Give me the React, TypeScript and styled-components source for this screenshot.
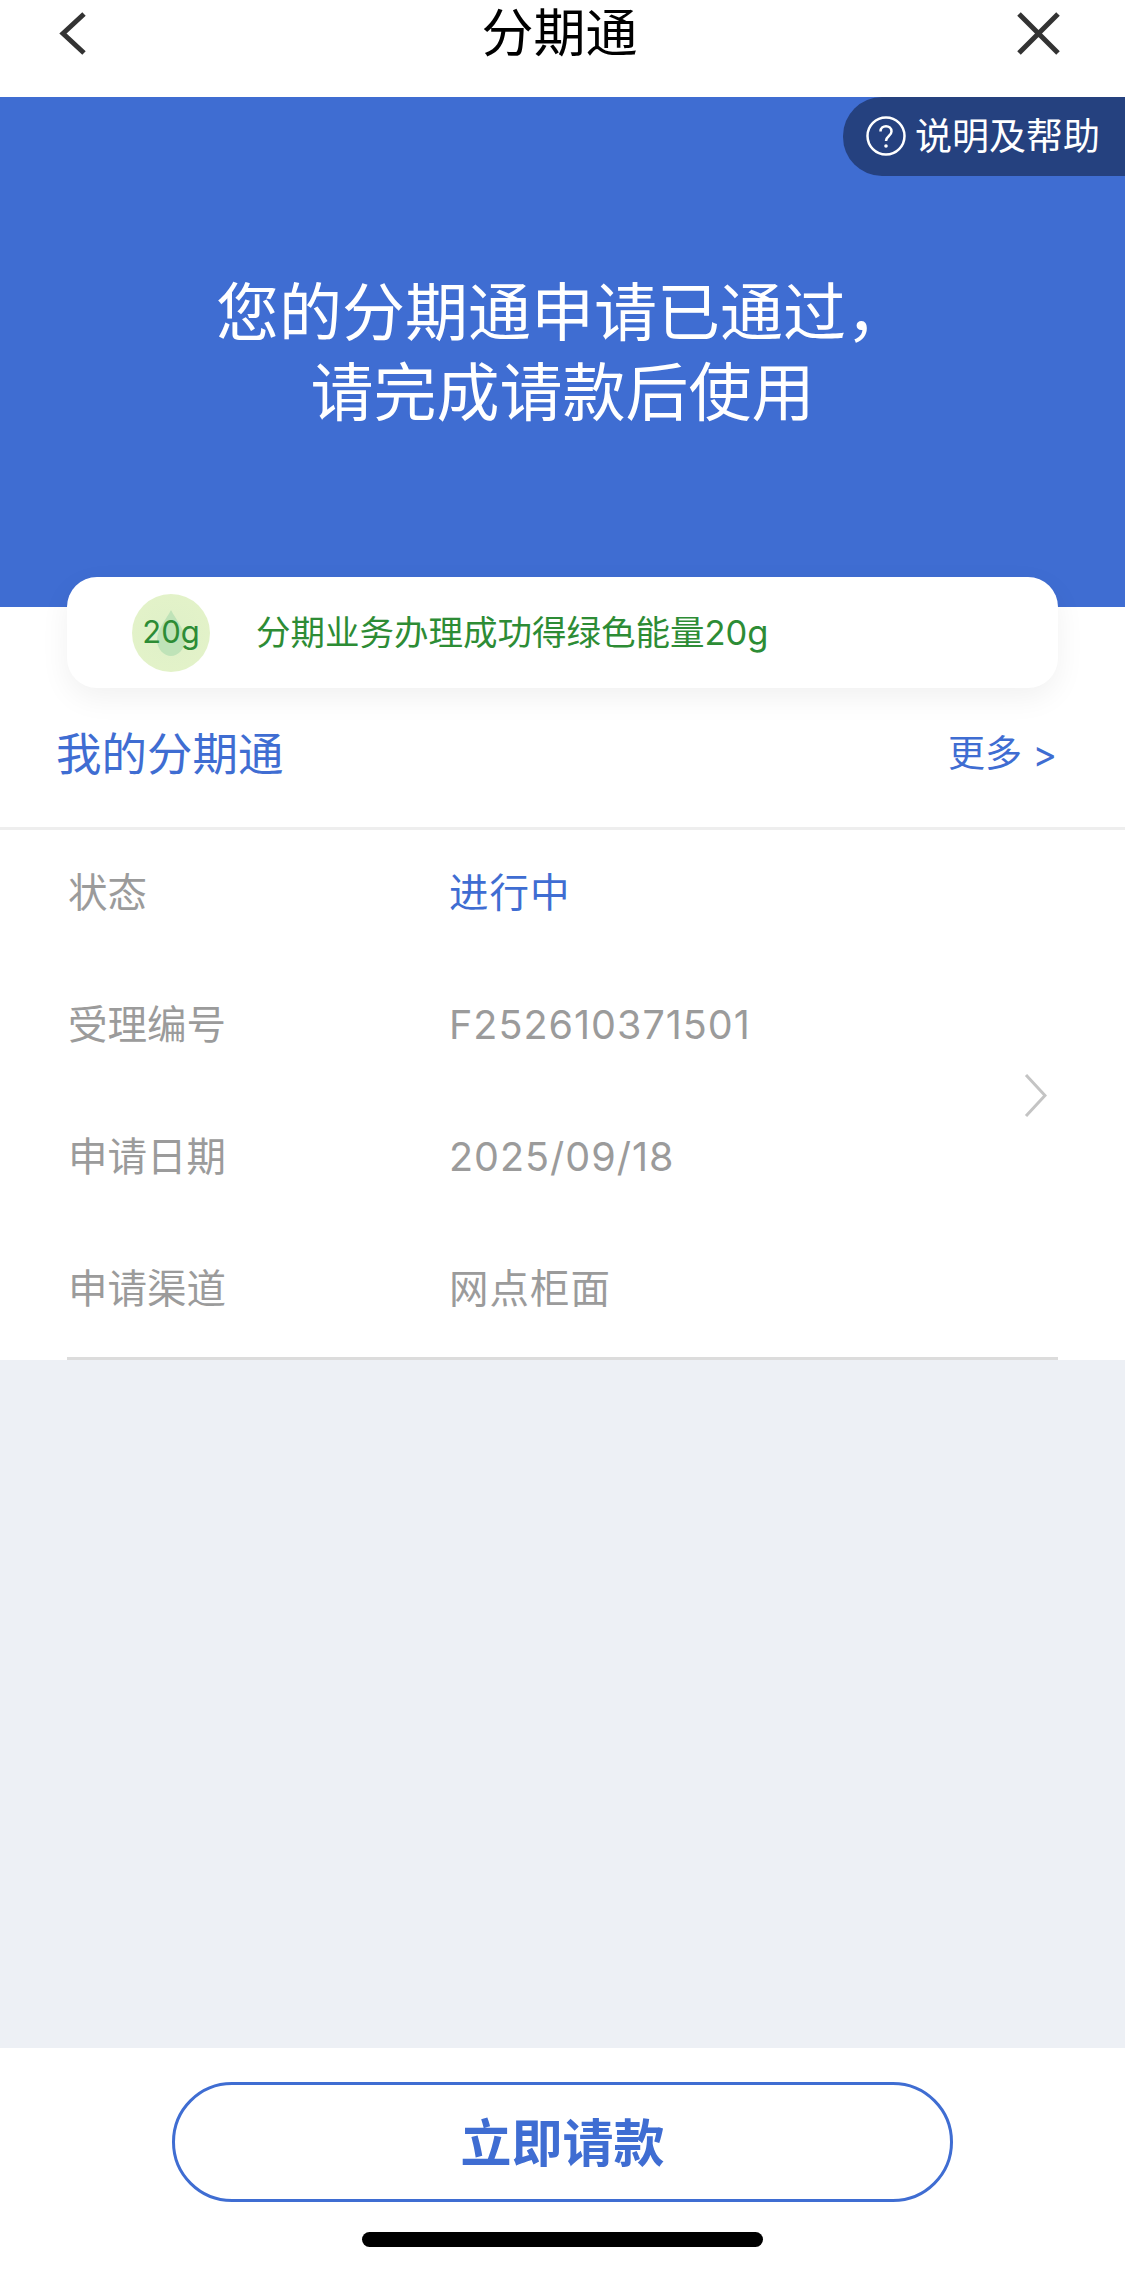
import React from "react";
import styled, { createGlobalStyle } from "styled-components";

const Global = createGlobalStyle`
  html, body { margin: 0; padding: 0; background: #fff; }
  body { font-family: Inter, "Noto Sans CJK SC", sans-serif; }
  * { box-sizing: border-box; }
`;

const Page = styled.div`
  width: 1125px;
  height: 2270px;
  display: flex;
  flex-direction: column;
  overflow: hidden;
  background: #fff;
`;

const NavBar = styled.header`
  height: 97px;
  flex: none;
  display: grid;
  grid-template-columns: 1fr auto 1fr;
  align-items: start;
  padding: 12px 65px 0 59px;
  background: #fff;
`;

const NavTitle = styled.h1`
  margin: -12px 0 0;
  font-size: 52px;
  line-height: 68px;
  font-weight: 400;
  color: #000;
`;

const NavIcon = styled.svg<{ $end?: boolean }>`
  display: block;
  justify-self: ${(p) => (p.$end ? "end" : "start")};
  fill: none;
  stroke: #333;
  stroke-width: 5;
`;

const Hero = styled.section`
  position: relative;
  height: 510px;
  flex: none;
  padding-top: 175px;
  background: #3f6dd2;
  text-align: center;
`;

const HeroLine = styled.div`
  font-size: 63px;
  line-height: 80px;
  color: #fff;
  white-space: pre;
`;

const HelpPill = styled.div`
  position: absolute;
  top: 0;
  right: 0;
  width: 282px;
  height: 79px;
  display: flex;
  align-items: center;
  gap: 9px;
  padding: 0 0 2px 23px;
  border-radius: 39px 0 0 39px;
  background: #25417f;
  color: #fff;
  font-size: 37px;
`;

const HelpLabel = styled.span`
  margin-bottom: 3px;
`;

const EnergyCard = styled.div`
  position: relative;
  height: 111px;
  flex: none;
  margin: -30px 67px 0;
  display: flex;
  align-items: center;
  padding-left: 65px;
  border-radius: 30px;
  background: #fff;
  box-shadow: 0 10px 30px rgba(0, 0, 0, 0.06);
`;

const EnergyBadge = styled.div`
  position: relative;
  width: 78px;
  height: 78px;
  flex: none;
  display: flex;
  align-items: center;
  justify-content: center;
  border-radius: 50%;
  background: radial-gradient(circle, #dff0c8 0%, #e4f3c9 100%);
  color: #2d8c35;
  font-size: 31px;
`;

const DropIcon = styled.svg`
  position: absolute;
  left: 24px;
  top: 15px;
`;

const BadgeText = styled.span`
  position: relative;
  margin-bottom: 2px;
`;

const EnergyText = styled.div`
  margin: 0 0 6px 46px;
  font-size: 34.5px;
  color: #2d8c35;
  white-space: nowrap;
`;

const SectionHead = styled.div`
  height: 142px;
  flex: none;
  display: flex;
  align-items: center;
  justify-content: space-between;
  padding: 0 68px 14px 56px;
  border-bottom: 3px solid #eeeeee;
`;

const SectionTitle = styled.div`
  font-size: 45.5px;
  color: #3f6dd2;
`;

const MoreLink = styled.div`
  font-size: 37px;
  color: #3f6dd2;
`;

const InfoBlock = styled.section`
  height: 527px;
  flex: none;
  display: flex;
  align-items: center;
  background: #fff;
`;

const InfoList = styled.div`
  flex: 1;
  display: flex;
  flex-direction: column;
`;

const InfoRow = styled.div`
  height: 132px;
  display: flex;
  align-items: baseline;
  padding: 31px 0 0 68px;
  font-size: 39.5px;
  color: #9b9b9b;
`;

const InfoLabel = styled.div`
  width: 381px;
  flex: none;
`;

const InfoValue = styled.div<{ $accent?: boolean }>`
  color: ${(p) => (p.$accent ? "#3f6dd2" : "#9b9b9b")};
  letter-spacing: 1px;
`;

const RowChevron = styled.svg`
  flex: none;
  margin: 3px 78px 0 0;
  fill: none;
  stroke: #c4c4c4;
  stroke-width: 3;
`;

const BottomRule = styled.div`
  height: 3px;
  flex: none;
  margin: 0 67px;
  background: #dcdcdc;
`;

const Filler = styled.div`
  flex: 1;
  background: #edf0f5;
`;

const Footer = styled.footer`
  height: 222px;
  flex: none;
  display: flex;
  flex-direction: column;
  align-items: center;
  padding-top: 34px;
  background: #fff;
`;

const PrimaryButton = styled.button`
  width: 781px;
  height: 120px;
  padding: 0 0 4px;
  border: 3px solid #3f6dd2;
  border-radius: 60px;
  background: #fff;
  color: #3f6dd2;
  font-family: inherit;
  font-size: 51px;
  font-weight: 700;
`;

const HomeIndicator = styled.div`
  width: 401px;
  height: 15px;
  margin-top: 30px;
  border-radius: 8px;
  background: #000;
`;

const rows = [
  { label: "状态", value: "进行中", accent: true },
  { label: "受理编号", value: "F252610371501" },
  { label: "申请日期", value: "2025/09/18" },
  { label: "申请渠道", value: "网点柜面" },
];

export default function App() {
  return (
    <Page>
      <Global />
      <NavBar>
        <NavIcon width="27" height="43" viewBox="0 0 27 43">
          <path d="M25 2 L4 21.5 L25 41" />
        </NavIcon>
        <NavTitle>分期通</NavTitle>
        <NavIcon $end width="43" height="43" viewBox="0 0 43 43">
          <path d="M2 2 L41 41 M41 2 L2 41" />
        </NavIcon>
      </NavBar>
      <Hero>
        <HelpPill>
          <svg width="40" height="40" viewBox="0 0 40 40">
            <circle cx="20" cy="20" r="18.5" fill="none" stroke="#fff" strokeWidth="2.5" />
            <path
              d="M14.5 15.5 C14.5 8.5 25.5 8.5 25.5 15.5 C25.5 20 20 20 20 25"
              fill="none"
              stroke="#fff"
              strokeWidth="2.5"
            />
            <circle cx="20" cy="30" r="1.8" fill="#fff" />
          </svg>
          <HelpLabel>说明及帮助</HelpLabel>
        </HelpPill>
        <HeroLine>您的分期通申请已通过，</HeroLine>
        <HeroLine>请完成请款后使用</HeroLine>
      </Hero>
      <EnergyCard>
        <EnergyBadge>
          <DropIcon width="30" height="48" viewBox="0 0 30 48">
            <path d="M15 1 C20 11 29 20 29 31 C29 40 22 47 15 47 C8 47 1 40 1 31 C1 20 10 11 15 1 Z" fill="#bfe3b8" />
          </DropIcon>
          <BadgeText>20g</BadgeText>
        </EnergyBadge>
        <EnergyText>分期业务办理成功得绿色能量20g</EnergyText>
      </EnergyCard>
      <SectionHead>
        <SectionTitle>我的分期通</SectionTitle>
        <MoreLink>更多 &gt;</MoreLink>
      </SectionHead>
      <InfoBlock>
        <InfoList>
          {rows.map((r) => (
            <InfoRow key={r.label}>
              <InfoLabel>{r.label}</InfoLabel>
              <InfoValue $accent={r.accent}>{r.value}</InfoValue>
            </InfoRow>
          ))}
        </InfoList>
        <RowChevron width="23" height="45" viewBox="0 0 23 45">
          <path d="M2 2 L21 22.5 L2 43" />
        </RowChevron>
      </InfoBlock>
      <BottomRule />
      <Filler />
      <Footer>
        <PrimaryButton>立即请款</PrimaryButton>
        <HomeIndicator />
      </Footer>
    </Page>
  );
}
